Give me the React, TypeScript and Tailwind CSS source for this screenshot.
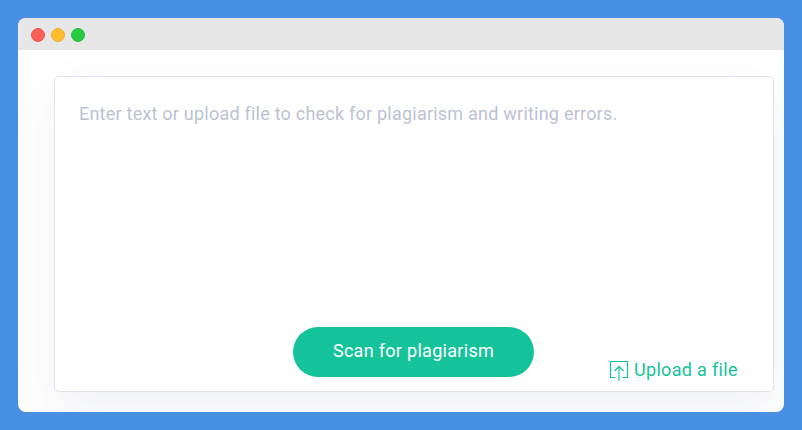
function UploadIcon() {
  return (
    <svg width="20" height="22" viewBox="0 0 20 22" fill="none" stroke="#15c39a" className="shrink-0">
      <path d="M6.5 17.5H1.5V1.5H18.5V17.5H13.5" strokeWidth="1.2" />
      <path d="M10 6.5V21" strokeWidth="1.6" opacity="0.7" />
      <path d="M5.5 11L10 6.5L14.5 11" strokeWidth="1.3" />
    </svg>
  );
}

export default function App() {
  return (
    <div className="h-[430px] w-[802px] bg-[#4a90e2] p-[18px] font-['Roboto','Liberation_Sans',sans-serif] text-[18px] leading-6">
      <div className="flex h-[394px] w-[766px] flex-col overflow-hidden rounded-lg bg-white">
        <header className="flex h-8 shrink-0 items-center gap-[6px] bg-[#e7e7e7] pt-[2px] pl-[13px]">
          <span className="size-[14px] rounded-full border border-[#f0564f] bg-[#ff5f57]" />
          <span className="size-[14px] rounded-full border border-[#e9ad3a] bg-[#ffbd2e]" />
          <span className="size-[14px] rounded-full border border-[#25bb3c] bg-[#28ca42]" />
        </header>
        <main className="flex-1 overflow-hidden pt-[26px] pl-9">
          <section className="flex h-[316px] w-[720px] flex-col justify-between rounded-[5px] border border-[#e0e2ee] bg-white shadow-[0_20px_50px_rgba(70,80,120,0.08)]">
            <p className="pt-[25px] pl-6 tracking-[0.225px] whitespace-nowrap text-[#bcc2d4]">
              Enter text or upload file to check for plagiarism and writing errors.
            </p>
            <div className="flex items-end pb-[9px] pl-[238px]">
              <button className="mb-[5px] h-[50px] w-[241px] rounded-full bg-[#15c39a] pb-[2px] tracking-[0.3px] whitespace-nowrap text-white">
                Scan for plagiarism
              </button>
              <a className="ml-[75px] flex items-center gap-[5px] tracking-[0.32px] whitespace-nowrap text-[#15c39a]">
                <UploadIcon />
                <span className="-mt-px">Upload a file</span>
              </a>
            </div>
          </section>
        </main>
      </div>
    </div>
  );
}
